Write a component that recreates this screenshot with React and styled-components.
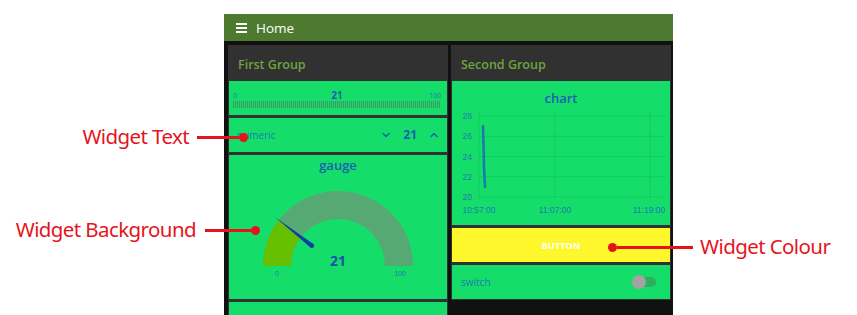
import React from 'react'
import styled, { createGlobalStyle } from 'styled-components'
import { ChevronDown, ChevronUp } from 'lucide-react'

const RED = '#e5141c'
const WIDGET_BG = '#15dd6a'
const BLUE = '#1a5fb4'
const TEAL = '#1d7bb4'

const GlobalStyle = createGlobalStyle`
  html, body {
    margin: 0;
    padding: 0;
    background: #fff;
  }
  body {
    font-family: 'Open Sans', 'Noto Sans', sans-serif;
  }
`

const Canvas = styled.div`
  position: relative;
  width: 857px;
  height: 315px;
  box-sizing: border-box;
  padding: 14px 0 0 224px;
  overflow: hidden;
  background: #fff;
`

const Dashboard = styled.div`
  width: 449px;
  height: 301px;
  background: #111;
  display: flex;
  flex-direction: column;
  overflow: hidden;
`

const Toolbar = styled.header`
  flex: none;
  height: 27px;
  background: #4e7a2f;
  display: flex;
  align-items: center;
  gap: 9px;
  padding-left: 12px;
  color: #fff;
  font-size: 13.5px;
`

const Burger = styled.span`
  display: flex;
  flex-direction: column;
  gap: 2px;
  width: 11px;
  span {
    height: 2px;
    background: #fff;
  }
`

const Columns = styled.div`
  display: grid;
  grid-template-columns: 220px 220px;
  column-gap: 3px;
  align-items: start;
  padding: 4px 0 0 4px;
`

const Group = styled.section`
  background: #313131;
  padding: 0 1px 1px;
`

const GroupTitle = styled.div`
  height: 36px;
  box-sizing: border-box;
  padding: 2px 0 0 9px;
  display: flex;
  align-items: center;
  color: #6ea43c;
  font-size: 12.5px;
  font-weight: 600;
`

const Stack = styled.div`
  display: flex;
  flex-direction: column;
  gap: 3px;
`

const Widget = styled.div`
  background: ${(p) => p.$bg || WIDGET_BG};
  height: ${(p) => p.$h || 34}px;
  box-sizing: border-box;
  flex: none;
`

/* slider */
const SliderWidget = styled(Widget)`
  padding: 9px 6px 0 4px;
`
const SliderLabels = styled.div`
  display: grid;
  grid-template-columns: 1fr auto 1fr;
  align-items: end;
  height: 10px;
  line-height: 10px;
  color: ${BLUE};
`
const Tiny = styled.span`
  font-size: 7px;
  line-height: 8px;
  color: ${TEAL};
  text-align: ${(p) => p.$align || 'left'};
`
const SliderValue = styled.span`
  font-size: 10px;
  font-weight: 700;
`
const Ticks = styled.div`
  margin-top: 1px;
  height: 7px;
  background: repeating-linear-gradient(90deg, #449567 0 1px, transparent 1px 2px);
`

/* numeric */
const RowWidget = styled(Widget)`
  display: flex;
  align-items: center;
  padding: 0 ${(p) => p.$pr || 7}px 0 ${(p) => p.$pl || 8}px;
`
const RowLabel = styled.span`
  flex: 1;
  font-size: 10px;
  color: ${TEAL};
`
const Stepper = styled.div`
  display: flex;
  align-items: center;
  gap: 11px;
  color: ${BLUE};
  svg {
    display: block;
  }
`
const StepValue = styled.span`
  font-size: 12px;
  font-weight: 700;
  line-height: 14px;
`

/* gauge + chart */
const PanelWidget = styled(Widget)`
  display: flex;
  flex-direction: column;
  align-items: center;
`
const PanelTitle = styled.div`
  margin-top: ${(p) => p.$mt}px;
  height: 18px;
  line-height: 18px;
  font-size: 13px;
  font-weight: 600;
  color: ${BLUE};
`
const Plot = styled.svg`
  display: block;
  flex: none;
  font-family: 'Liberation Sans', Arial, sans-serif;
`

/* button */
const ButtonWidget = styled(Widget)`
  display: flex;
  align-items: center;
  justify-content: center;
  color: #fff;
  font-size: 9px;
  font-weight: 700;
  letter-spacing: 0.2px;
`

/* switch */
const Toggle = styled.span`
  position: relative;
  width: 23px;
  height: 10px;
  border-radius: 5px;
  background: #2fae5c;
  &::after {
    content: '';
    position: absolute;
    left: -1px;
    top: -2px;
    width: 14px;
    height: 14px;
    border-radius: 50%;
    background: #a3a3a3;
  }
`

/* annotations */
const Callout = styled.div`
  position: absolute;
  top: ${(p) => p.$top}px;
  ${(p) => (p.$flip ? `left: ${p.$left}px;` : `right: ${p.$right}px;`)}
  height: 30px;
  display: flex;
  flex-direction: ${(p) => (p.$flip ? 'row-reverse' : 'row')};
  align-items: center;
  color: ${RED};
  font-family: 'Noto Sans', 'Open Sans', sans-serif;
  font-size: 20.5px;
  letter-spacing: -0.6px;
  white-space: nowrap;
`
const CalloutText = styled.span`
  line-height: 22px;
  margin-top: -2px;
`
const Lead = styled.span`
  width: ${(p) => p.$w}px;
  height: 3px;
  background: ${RED};
  ${(p) => (p.$flip ? `margin-right: ${p.$gap}px;` : `margin-left: ${p.$gap}px;`)}
`
const Dot = styled.span`
  width: 9px;
  height: 9px;
  border-radius: 50%;
  background: ${RED};
  flex: none;
`

function bandPath(cx, cy, R, r, t0, t1) {
  const pt = (rad, t) => {
    const a = Math.PI * (1 - t)
    return [cx + rad * Math.cos(a), cy - rad * Math.sin(a)]
  }
  const [ax, ay] = pt(R, t0)
  const [bx, by] = pt(R, t1)
  const [cx1, cy1] = pt(r, t1)
  const [dx, dy] = pt(r, t0)
  return `M ${ax} ${ay} A ${R} ${R} 0 0 1 ${bx} ${by} L ${cx1} ${cy1} A ${r} ${r} 0 0 0 ${dx} ${dy} Z`
}

const Gauge = ({ value }) => {
  const cx = 109
  const cy = 92
  const t = value / 100
  const a = Math.PI * (1 - t)
  const ux = Math.cos(a)
  const uy = -Math.sin(a)
  const tip = [cx + 80 * ux, cy + 80 * uy]
  const base = [cx + 33 * ux, cy + 33 * uy]
  const nx = -uy
  const ny = ux
  const needle = [
    tip,
    [base[0] + 2.2 * nx, base[1] + 2.2 * ny],
    [base[0] - 2.2 * nx, base[1] - 2.2 * ny],
  ]
    .map((p) => p.join(','))
    .join(' ')

  return (
    <Plot width="218" height="125" viewBox="0 0 218 125">
      <path d={bandPath(cx, cy, 75, 47, 0, 1)} fill="#57a974" />
      <path d={bandPath(cx, cy, 75, 47, 0, t)} fill="#66c000" />
      <polygon points={needle} fill="#0c3fa6" />
      <circle cx={base[0]} cy={base[1]} r="2.2" fill="#0c3fa6" />
      <text x={cx} y={cy} textAnchor="middle" fontSize="14" fontWeight="700" fill="#1f4fa8"
        fontFamily="'Open Sans', sans-serif">
        {value}
      </text>
      <text x="48" y="102" textAnchor="middle" fontSize="7" fill={TEAL}>0</text>
      <text x="171" y="102" textAnchor="middle" fontSize="7" fill={TEAL}>100</text>
    </Plot>
  )
}

const Chart = () => {
  const ox = 451
  const oy = 107
  const y = (v) => 197 - (v - 20) * 10.125 - oy
  const gx = [479, 555, 650].map((v) => v - ox)
  const xl = [
    ['10:57:00', 479],
    ['11:07:00', 555],
    ['11:19:00', 649],
  ]
  const line = [
    [483, 27],
    [483.6, 25],
    [484, 23],
    [484.4, 22.2],
    [485, 21],
  ]
    .map(([x, v]) => `${x - ox},${y(v)}`)
    .join(' ')

  return (
    <Plot width="220" height="118" viewBox="0 0 220 118">
      {[20, 22, 24, 26, 28].map((v) => (
        <g key={v}>
          <line x1={28} x2={215} y1={y(v)} y2={y(v)} stroke="rgba(0,70,40,0.12)" strokeWidth="1" />
          <text x="21" y={y(v) + 3} textAnchor="end" fontSize="8.5" fill={TEAL}>{v}</text>
        </g>
      ))}
      {gx.map((x) => (
        <line key={x} x1={x} x2={x} y1={5} y2={91} stroke="rgba(0,70,40,0.12)" strokeWidth="1" />
      ))}
      {xl.map(([label, x]) => (
        <text key={label} x={x - ox} y="105.5" textAnchor="middle" fontSize="8.5" fill={TEAL}>
          {label}
        </text>
      ))}
      <polyline points={line} fill="none" stroke="#1b78b3" strokeWidth="2.5" strokeLinecap="round" />
    </Plot>
  )
}

export default function App() {
  return (
    <>
      <GlobalStyle />
      <Canvas>
        <Dashboard>
          <Toolbar>
            <Burger>
              <span />
              <span />
              <span />
            </Burger>
            Home
          </Toolbar>
          <Columns>
            <Group>
              <GroupTitle>First Group</GroupTitle>
              <Stack>
                <SliderWidget>
                  <SliderLabels>
                    <Tiny>0</Tiny>
                    <SliderValue>21</SliderValue>
                    <Tiny $align="right">100</Tiny>
                  </SliderLabels>
                  <Ticks />
                </SliderWidget>
                <RowWidget>
                  <RowLabel>numeric</RowLabel>
                  <Stepper>
                    <ChevronDown size={12} strokeWidth={3} />
                    <StepValue>21</StepValue>
                    <ChevronUp size={12} strokeWidth={3} />
                  </Stepper>
                </RowWidget>
                <PanelWidget $h={144}>
                  <PanelTitle $mt={1}>gauge</PanelTitle>
                  <Gauge value={21} />
                </PanelWidget>
                <Widget />
              </Stack>
            </Group>
            <Group>
              <GroupTitle>Second Group</GroupTitle>
              <Stack>
                <PanelWidget $h={144}>
                  <PanelTitle $mt={8}>chart</PanelTitle>
                  <Chart />
                </PanelWidget>
                <ButtonWidget $bg="#fef72b">BUTTON</ButtonWidget>
                <RowWidget $pl={9} $pr={14}>
                  <RowLabel>switch</RowLabel>
                  <Toggle />
                </RowWidget>
              </Stack>
            </Group>
          </Columns>
        </Dashboard>

        <Callout $top={122} $right={609}>
          <CalloutText>Widget Text</CalloutText>
          <Lead $w={42} $gap={8} />
          <Dot />
        </Callout>
        <Callout $top={215} $right={597}>
          <CalloutText>Widget Background</CalloutText>
          <Lead $w={46} $gap={9} />
          <Dot />
        </Callout>
        <Callout $top={232} $left={608} $flip>
          <CalloutText>Widget Colour</CalloutText>
          <Lead $w={76} $gap={7} $flip />
          <Dot />
        </Callout>
      </Canvas>
    </>
  )
}
